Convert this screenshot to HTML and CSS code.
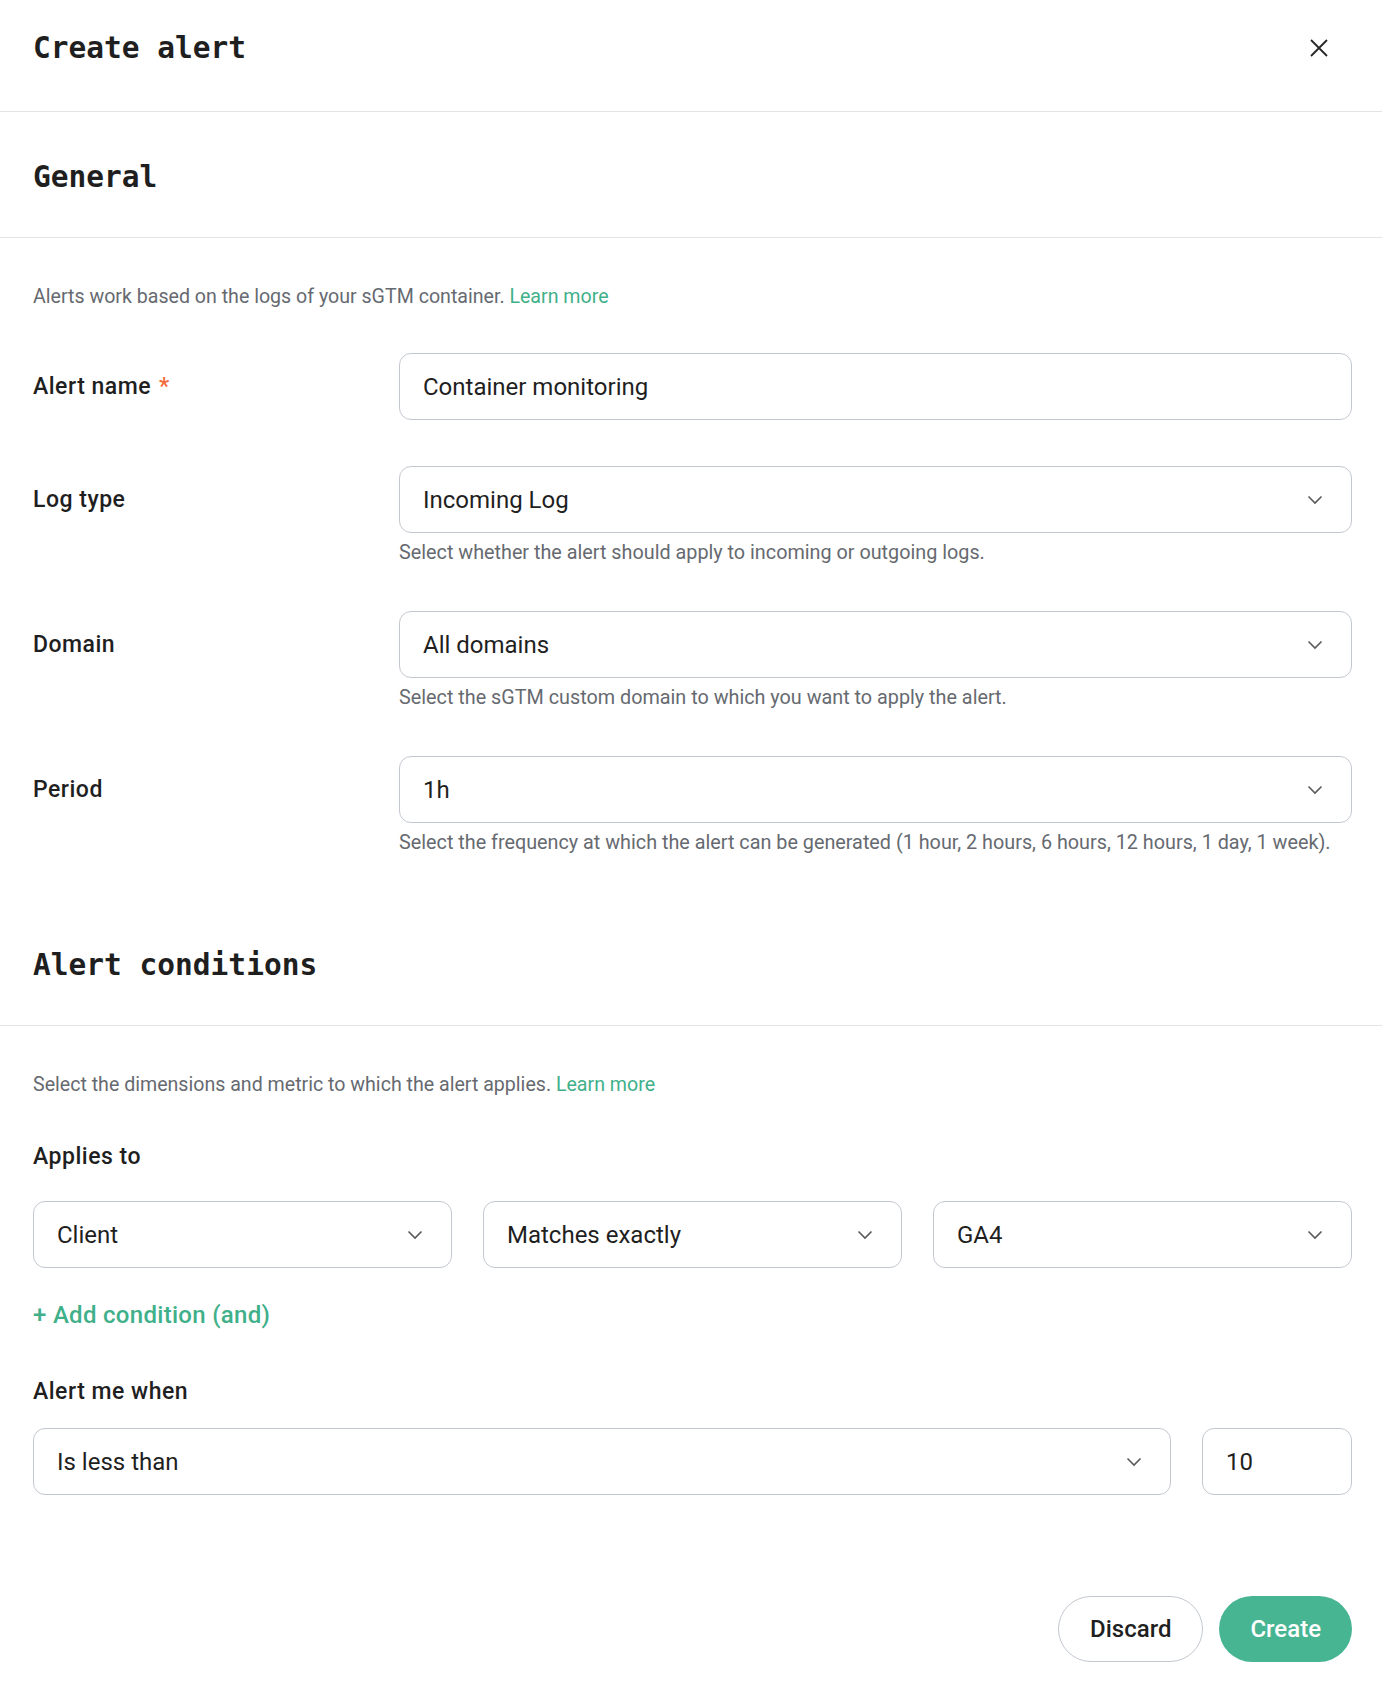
FILE: index.html
```html
<!DOCTYPE html>
<html>
<head>
    <meta charset="UTF-8">
    <title>Create alert</title>
    <link rel="stylesheet" href="styles.css">
</head>
<body>
<div class="panel">
    <div class="panel-header">
        <h1>Create alert</h1>
        <button class="close-btn" type="button" aria-label="Close">
            <svg width="18" height="18" viewBox="0 0 18 18"><path d="M1 1 L17 17 M17 1 L1 17" stroke="#262626" stroke-width="1.8" fill="none"/></svg>
        </button>
    </div>

    <div class="section-head">
        <h2>General</h2>
    </div>
    <div class="section-body">
        <p class="intro">Alerts work based on the logs of your sGTM container. <a href="#">Learn more</a></p>

        <div class="field-row">
            <label class="field-label">Alert name <span class="req">*</span></label>
            <div class="field-control">
                <div class="box">Container monitoring</div>
            </div>
        </div>

        <div class="field-row">
            <label class="field-label">Log type</label>
            <div class="field-control">
                <div class="box select">Incoming Log <svg class="chev" width="16" height="10" viewBox="0 0 16 10"><path d="M1.5 1.5 L8 8 L14.5 1.5" stroke="#5a5a5a" stroke-width="1.6" fill="none"/></svg></div>
                <p class="help">Select whether the alert should apply to incoming or outgoing logs.</p>
            </div>
        </div>

        <div class="field-row">
            <label class="field-label">Domain</label>
            <div class="field-control">
                <div class="box select">All domains <svg class="chev" width="16" height="10" viewBox="0 0 16 10"><path d="M1.5 1.5 L8 8 L14.5 1.5" stroke="#5a5a5a" stroke-width="1.6" fill="none"/></svg></div>
                <p class="help">Select the sGTM custom domain to which you want to apply the alert.</p>
            </div>
        </div>

        <div class="field-row">
            <label class="field-label">Period</label>
            <div class="field-control">
                <div class="box select">1h <svg class="chev" width="16" height="10" viewBox="0 0 16 10"><path d="M1.5 1.5 L8 8 L14.5 1.5" stroke="#5a5a5a" stroke-width="1.6" fill="none"/></svg></div>
                <p class="help">Select the frequency at which the alert can be generated (1 hour, 2 hours, 6 hours, 12 hours, 1 day, 1 week).</p>
            </div>
        </div>
    </div>

    <div class="section-head">
        <h2>Alert conditions</h2>
    </div>
    <div class="section-body">
        <p class="intro">Select the dimensions and metric to which the alert applies. <a href="#">Learn more</a></p>

        <div class="block-label">Applies to</div>
        <div class="cond-row">
            <div class="box select">Client <svg class="chev" width="16" height="10" viewBox="0 0 16 10"><path d="M1.5 1.5 L8 8 L14.5 1.5" stroke="#5a5a5a" stroke-width="1.6" fill="none"/></svg></div>
            <div class="box select">Matches exactly <svg class="chev" width="16" height="10" viewBox="0 0 16 10"><path d="M1.5 1.5 L8 8 L14.5 1.5" stroke="#5a5a5a" stroke-width="1.6" fill="none"/></svg></div>
            <div class="box select">GA4 <svg class="chev" width="16" height="10" viewBox="0 0 16 10"><path d="M1.5 1.5 L8 8 L14.5 1.5" stroke="#5a5a5a" stroke-width="1.6" fill="none"/></svg></div>
        </div>
        <a class="add-link" href="#">+ Add condition (and)</a>

        <div class="block-label when-label">Alert me when</div>
        <div class="when-row">
            <div class="box select">Is less than <svg class="chev" width="16" height="10" viewBox="0 0 16 10"><path d="M1.5 1.5 L8 8 L14.5 1.5" stroke="#5a5a5a" stroke-width="1.6" fill="none"/></svg></div>
            <div class="box">10</div>
        </div>
    </div>

    <div class="panel-footer">
        <button class="btn btn-outline" type="button">Discard</button>
        <button class="btn btn-primary" type="button">Create</button>
    </div>
</div>
</body>
</html>
```

FILE: styles.css
```css
body {
    margin: 0;
    font-family: Roboto, "Noto Sans", sans-serif;
    background-color: #ffffff;
    color: #1f1f1f;
}

.panel {
    width: 1382px;
}

.panel-header {
    display: flex;
    justify-content: space-between;
    align-items: center;
    height: 95px;
    padding: 0 54px 16px 33px;
    border-bottom: 1px solid #e3e4e8;
}

h1,
h2 {
    margin: 0;
    font-family: "DejaVu Sans Mono", "Liberation Mono", monospace;
    font-size: 29.5px;
    font-weight: bold;
    color: #1f1f1f;
}

.close-btn {
    border: none;
    background: none;
    padding: 0;
    width: 18px;
    height: 18px;
    cursor: pointer;
}

.section-head {
    display: flex;
    align-items: center;
    box-sizing: border-box;
    height: 126px;
    padding: 4px 33px 0;
    border-bottom: 1px solid #e3e4e8;
}

.section-body {
    padding: 46px 30px 45px 33px;
}

.intro {
    margin: 0;
    font-size: 19.6px;
    line-height: 26px;
    color: #666a70;
}

.intro a,
.add-link {
    color: #3fb08a;
    text-decoration: none;
}

.field-row {
    display: grid;
    grid-template-columns: 366px 1fr;
    margin-top: 43px;
}

.field-row + .field-row {
    margin-top: 46px;
}

.field-label {
    height: 66px;
    display: flex;
    align-items: center;
    font-size: 23px;
    font-weight: 500;
    letter-spacing: 0.5px;
}

.req {
    color: #f26b3a;
    margin-left: 8px;
}

.box {
    display: flex;
    align-items: center;
    justify-content: space-between;
    box-sizing: border-box;
    height: 67px;
    padding: 0 28px 0 23px;
    border: 1px solid #c3c8d0;
    border-radius: 12px;
    font-size: 24px;
    color: #1f1f1f;
}

.help {
    margin: 8px 0 0;
    font-size: 19.8px;
    line-height: 24px;
    color: #666a70;
}

.block-label {
    margin-top: 46px;
    font-size: 23px;
    font-weight: 500;
    letter-spacing: 0.5px;
    line-height: 26px;
}

.when-label {
    margin-top: 51px;
}

.cond-row {
    display: grid;
    grid-template-columns: 1fr 1fr 1fr;
    gap: 31px;
    margin-top: 31px;
}

.add-link {
    display: block;
    margin-top: 34px;
    font-size: 24px;
    font-weight: 500;
    letter-spacing: 0.3px;
    line-height: 26px;
}

.when-row {
    display: grid;
    grid-template-columns: 1fr 150px;
    gap: 31px;
    margin-top: 23px;
}

.panel-footer {
    display: flex;
    justify-content: flex-end;
    gap: 16px;
    padding: 56px 30px 22px 33px;
}

.btn {
    height: 66px;
    padding: 0 31px;
    border-radius: 33px;
    font-family: Roboto, "Noto Sans", sans-serif;
    font-size: 24px;
    font-weight: 500;
    cursor: pointer;
}

.btn-outline {
    border: 1px solid #c3c8d0;
    background-color: #ffffff;
    color: #1f1f1f;
}

.btn-primary {
    border: none;
    background-color: #47b592;
    color: #ffffff;
}
```
